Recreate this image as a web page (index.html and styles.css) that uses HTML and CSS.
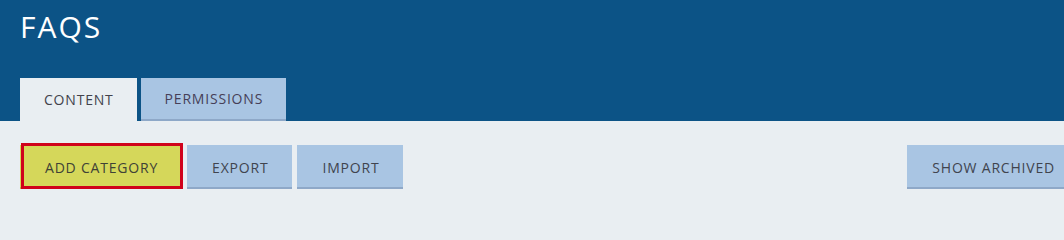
FILE: index.html
```
<!DOCTYPE html>
<html lang="en">
<head>
<meta charset="utf-8">
<title>FAQS</title>
<link rel="stylesheet" href="styles.css">
</head>
<body>
<div class="page">
  <header class="banner">
    <h1 class="title">FAQS</h1>
    <nav class="tabs">
      <a class="tab tab-active">CONTENT</a>
      <a class="tab">PERMISSIONS</a>
    </nav>
  </header>
  <main class="content">
    <div class="toolbar">
      <div class="group">
        <button class="btn btn-primary highlighted">ADD CATEGORY</button>
        <button class="btn">EXPORT</button>
        <button class="btn">IMPORT</button>
      </div>
      <button class="btn">SHOW ARCHIVED</button>
    </div>
  </main>
</div>
</body>
</html>
```
FILE: styles.css
```
html, body {
  margin: 0;
  padding: 0;
  height: 206px;
  overflow: hidden;
  background: #e9eef2;
}
.page {
  width: 1099px;
  height: 206px;
  overflow: hidden;
  font-family: "Open Sans", "Liberation Sans", sans-serif;
}
.banner {
  background: #0c5386;
  height: 121px;
  padding: 7px 20px 0;
  box-sizing: border-box;
  display: flex;
  flex-direction: column;
}
.title {
  margin: 0;
  color: #ffffff;
  font-weight: 400;
  font-size: 30px;
  line-height: 40px;
  letter-spacing: 2px;
}
.tabs {
  margin-top: auto;
  display: flex;
  gap: 4px;
}
.tab {
  display: block;
  height: 43px;
  box-sizing: border-box;
  padding: 0 23px 0 24px;
  font-size: 14px;
  letter-spacing: 0.8px;
  color: #463f58;
  background: #a9c5e3;
  border-bottom: 2px solid #8ea8c8;
  line-height: 41px;
}
.tab-active {
  background: #e9eef2;
  border-bottom: none;
  line-height: 43px;
  color: #42424c;
}
.content {
  padding: 24px 20px 0;
}
.toolbar {
  display: flex;
  justify-content: space-between;
}
.group {
  display: flex;
  gap: 5px;
}
.btn {
  position: relative;
  height: 44px;
  box-sizing: border-box;
  padding: 2px 24px 0 25px;
  border: none;
  border-bottom: 2px solid #8ea8c8;
  background: #a9c5e3;
  font-family: inherit;
  font-size: 14px;
  letter-spacing: 0.8px;
  color: #40444e;
  cursor: pointer;
}
.btn-primary {
  background: #d5d75a;
  border-bottom-color: #b7b94a;
  color: #404236;
}
.highlighted::after {
  content: "";
  position: absolute;
  top: -2px;
  left: 1px;
  right: -1px;
  bottom: -2px;
  border: 3px solid #d0021b;
}
```
